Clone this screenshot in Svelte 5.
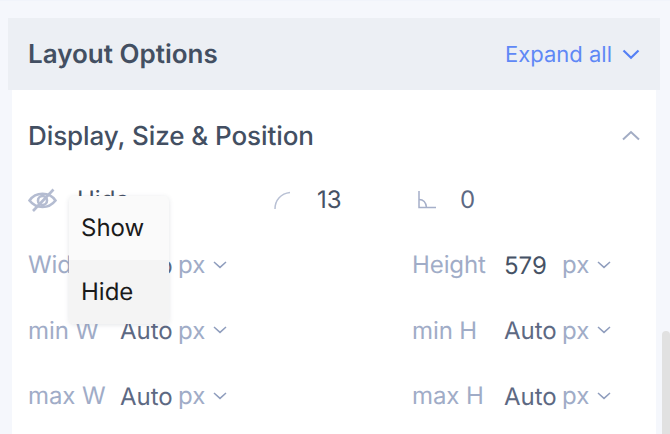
<script>
  const rows = [
    { l: 'Width', lv: 'Auto', r: 'Height', rv: '579', rvDark: true },
    { l: 'min W', lv: 'Auto', r: 'min H', rv: 'Auto' },
    { l: 'max W', lv: 'Auto', r: 'max H', rv: 'Auto' }
  ];
</script>

{#snippet unit()}
  <span class="unit">px
    <svg class="chev" width="14" height="8" viewBox="0 0 14 8" fill="none"><path d="M1 1l6 5.400L13 1" stroke="#8f9dbd" stroke-width="1.500"/></svg>
  </span>
{/snippet}

<div class="page">
  <div class="topline"></div>
  <section class="panel">
    <header class="head">
      <h2>Layout Options</h2>
      <span class="expand">Expand all
        <svg width="18" height="11" viewBox="0 0 18 11" fill="none"><path d="M1.500 1.500L9 8.800l7.500-7.300" stroke="#5580f5" stroke-width="2.200"/></svg>
      </span>
    </header>
    <div class="body">
      <div class="title">
        <h3>Display, Size &amp; Position</h3>
        <svg width="18" height="11" viewBox="0 0 18 11" fill="none"><path d="M1 9.500L9 2l8 7.500" stroke="#a2acc4" stroke-width="2"/></svg>
      </div>
      <div class="top">
        <div class="vis">
          <svg class="eye" width="29" height="24" viewBox="0 0 29 24" fill="none" stroke="#b4bcd1" stroke-width="2.600">
            <path d="M1.500 12.500C5 7.500 9 5.800 14.500 5.800S24 7.500 27.500 12.500C24 17 20 19 14.500 19S5 17 1.500 12.500z"/>
            <circle cx="14.500" cy="12.500" r="4.500"/>
            <path d="M25.500 1.500L5 23"/>
          </svg>
          <span class="val">Hide</span>
          <div class="menu">
            <div class="opt">Show</div>
            <div class="opt sel">Hide</div>
          </div>
        </div>
        <div class="radius">
          <svg width="18" height="18" viewBox="0 0 18 18" fill="none"><path d="M1 18C1 9 7 2.500 16 1.500" stroke="#b8c0d4" stroke-width="1.500"/></svg>
          <span class="val">13</span>
        </div>
        <div class="angle">
          <svg width="18" height="18" viewBox="0 0 18 18" fill="none" stroke="#a5afc9" stroke-width="1.500"><path d="M1 0v16.500h17"/><path d="M1 8.500c4 0 7 3 7.500 8"/></svg>
          <span class="val zero">0</span>
        </div>
      </div>
      <div class="grid">
        {#each rows as row}
          <div class="field">
            <span class="lab">{row.l}</span>
            <span class="num">{row.lv}</span>
            {@render unit()}
          </div>
          <div class="field">
            <span class="lab">{row.r}</span>
            <span class="num" class:dark={row.rvDark}>{row.rv}</span>
            {@render unit()}
          </div>
        {/each}
      </div>
    </div>
  </section>
  <div class="thumb"></div>
</div>

<style>
  :global(body) { margin: 0; background: #f5f7fc; }
  .page { position: relative; width: 670px; height: 434px; overflow: hidden; font-family: Inter, "Noto Sans", sans-serif; background: #f5f7fc; text-rendering: geometricPrecision; }
  .topline { height: 1px; background: #f1f4fb; }
  .panel { margin: 17px 10px 0 8px; }
  .head { height: 72px; background: #eceff4; display: flex; align-items: center; justify-content: space-between; padding: 1px 20px 0 20px; box-sizing: border-box; }
  h2 { margin: 0; font-size: 26px; font-weight: 600; color: #434f62; }
  .expand { display: flex; align-items: center; gap: 10px; font-size: 22px; color: #5f88f6; }
  .expand svg { margin-top: -1px; }
  .body { margin: 0 4px; background: #fff; height: 360px; padding: 0 16px; box-sizing: border-box; }
  .title { height: 91px; display: flex; align-items: center; justify-content: space-between; padding-top: 1px; box-sizing: border-box; }
  .title svg { margin-top: -1px; }
  h3 { margin: 0; font-size: 26px; font-weight: 500; color: #434f62; letter-spacing: -0.08px; }
  .top { display: flex; align-items: center; height: 38px; }
  .vis { position: relative; width: 246px; display: flex; align-items: center; gap: 20px; }
  .val { font-size: 24px; color: #465265; line-height: 38px; }
  .radius { width: 144px; display: flex; align-items: center; gap: 25px; }
  .angle { display: flex; align-items: center; gap: 24px; }
  .zero { color: #5d6983; }
  .menu { position: absolute; left: 41px; top: 15px; width: 100px; background: #fafafa; border-radius: 5px; overflow: hidden; box-shadow: 0 1px 5px rgba(60,70,90,.14); z-index: 2; }
  .opt { height: 64px; display: flex; align-items: center; padding: 0 0 2px 12px; box-sizing: border-box; font-size: 24px; color: #1a1a1a; }
  .sel { background: #f4f4f4; }
  .grid { display: grid; grid-template-columns: 384px 1fr; grid-auto-rows: 65.500px; margin-top: 13px; }
  .field { display: flex; align-items: center; height: 65.500px; }
  .lab { width: 92px; font-size: 24px; color: #a0acc7; white-space: nowrap; letter-spacing: -0.1px; }
  .num { width: 58px; font-size: 24px; color: #5d6983; white-space: nowrap; padding-top: 1px; }
  .dark { color: #465265; }
  .unit { display: flex; align-items: center; gap: 8px; font-size: 24px; color: #a0acc7; }
  .thumb { position: absolute; right: 0; top: 331px; width: 8px; height: 103px; background: #e1e1e1; border-radius: 4px 4px 0 0; }
</style>
